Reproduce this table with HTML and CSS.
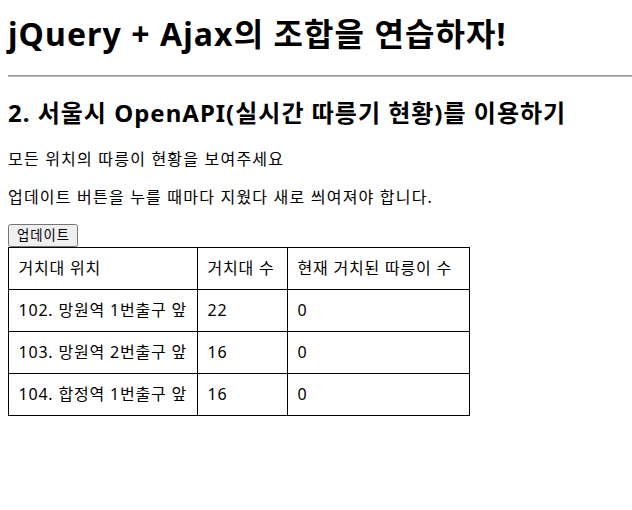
FILE: index.html
```html
<!DOCTYPE html>
<html lang="ko">
<head>
<meta charset="utf-8">
<title>jQuery + Ajax</title>
<link rel="stylesheet" href="styles.css">
</head>
<body>
<h1 class="title">jQuery + Ajax의 조합을 연습하자!</h1>
<hr class="rule">
<div class="wrap">
  <h2 class="subtitle">2. 서울시 OpenAPI(실시간 따릉기 현황)를 이용하기</h2>
  <p class="desc">모든 위치의 따릉이 현황을 보여주세요</p>
  <p class="desc">업데이트 버튼을 누를 때마다 지웠다 새로 씌여져야 합니다.</p>
  <button class="btn" type="button">업데이트</button>
  <table class="bikes">
    <colgroup>
      <col class="c1">
      <col class="c2">
      <col class="c3">
    </colgroup>
    <thead>
      <tr>
        <td class="cell">거치대 위치</td>
        <td class="cell">거치대 수</td>
        <td class="cell">현재 거치된 따릉이 수</td>
      </tr>
    </thead>
    <tbody>
      <tr>
        <td class="cell">102. 망원역 1번출구 앞</td>
        <td class="cell">22</td>
        <td class="cell">0</td>
      </tr>
      <tr>
        <td class="cell">103. 망원역 2번출구 앞</td>
        <td class="cell">16</td>
        <td class="cell">0</td>
      </tr>
      <tr>
        <td class="cell">104. 합정역 1번출구 앞</td>
        <td class="cell">16</td>
        <td class="cell">0</td>
      </tr>
    </tbody>
  </table>
</div>
</body>
</html>
```

FILE: styles.css
```css
html, body {
  background: #fff;
}
body {
  margin: 0;
  padding: 8px;
  color: #000;
  font-family: "Noto Sans", "Noto Sans CJK KR", sans-serif;
  font-size: 16px;
  line-height: 22px;
}
.title {
  font-size: 32px;
  font-weight: 700;
  line-height: 42px;
  letter-spacing: 1.08px;
  margin: 4.5px 0 20.5px;
}
.rule {
  margin: 0 -8px 0 0;
  border: 0;
  border-top: 1px solid #9c9c9c;
  border-bottom: 1px solid #b4b4b4;
  height: 0;
}
.subtitle {
  font-size: 24px;
  font-weight: 700;
  line-height: 32px;
  letter-spacing: 1px;
  margin: 20px 0 19px;
}
.desc {
  margin: 0 0 16px;
  letter-spacing: 1.2px;
}
.btn {
  display: block;
  margin: 0;
  font-family: "Noto Sans", "Noto Sans CJK KR", sans-serif;
  font-size: 13.33px;
  line-height: 17px;
  letter-spacing: 1px;
  padding: 1px 6px 1px 7px;
}
.bikes {
  margin-top: 0;
  border-collapse: collapse;
  table-layout: fixed;
  width: 461px;
  margin-left: -0.5px;
}
.c1 { width: 189px; }
.c2 { width: 90px; }
.c3 { width: 182px; }
.cell {
  border: 1px solid #000;
  padding: 10px;
  line-height: 21px;
  letter-spacing: 0.8px;
  text-align: left;
  white-space: nowrap;
}
```
